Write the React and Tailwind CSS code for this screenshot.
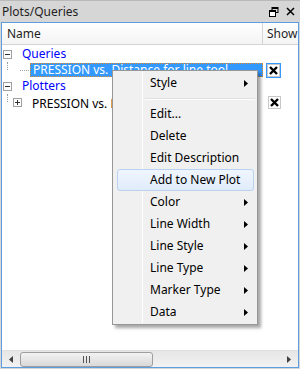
import React from "react";

const font = { fontFamily: '"Noto Sans", "Open Sans", sans-serif' };

function Arrow({ className = "" }) {
  return (
    <svg width="4" height="7" viewBox="0 0 4 7" className={className}>
      <path d="M0 0 L4 3.5 L0 7 Z" fill="#000" />
    </svg>
  );
}

function CheckX() {
  return (
    <div className="w-[13px] h-[13px] bg-white border border-[#c8c8c8] flex items-center justify-center">
      <svg width="9" height="9" viewBox="0 0 9 9">
        <path d="M1 1 L8 8 M8 1 L1 8" stroke="#000" strokeWidth="2.4" />
      </svg>
    </div>
  );
}

function Expander({ open }) {
  return (
    <div className="w-[9px] h-[9px] border border-[#a0a0a0] bg-white flex items-center justify-center">
      <svg width="7" height="7" viewBox="0 0 7 7">
        <path d="M1 3.5 H6" stroke="#333" strokeWidth="1" />
        {!open && <path d="M3.5 1 V6" stroke="#333" strokeWidth="1" />}
      </svg>
    </div>
  );
}

const menuItems = [
  { label: "Edit..." },
  { label: "Delete" },
  { label: "Edit Description" },
  { label: "Add to New Plot", hot: true },
  { label: "Color", sub: true },
  { label: "Line Width", sub: true },
  { label: "Line Style", sub: true },
  { label: "Line Type", sub: true },
  { label: "Marker Type", sub: true },
  { label: "Data", sub: true },
];

function MenuItem({ label, sub, hot }) {
  return (
    <div className="relative h-[22px] flex items-center pl-[36px]">
      {hot && (
        <div className="absolute left-[3px] right-[3px] top-0 bottom-0 rounded-[3px] border border-[#b8d2f0] bg-gradient-to-b from-[#f0f6fd] to-[#e0ecfb]" />
      )}
      <span className="relative text-[12px] text-black">{label}</span>
      {sub && <Arrow className="absolute left-[130px] top-[8px]" />}
    </div>
  );
}

export default function App() {
  return (
    <div className="relative w-[300px] h-[369px] bg-[#d6d6d6] flex flex-col overflow-hidden" style={font}>
      {/* title bar */}
      <div className="h-[22px] flex items-center border-t border-[#b9b9b9] pl-[2px] pr-[5px]">
        <span className="text-[12px] text-[#1e1e1e] flex-1">Plots/Queries</span>
        <svg width="10" height="10" viewBox="0 0 10 10" className="mr-[7px]">
          <rect x="3" y="0.5" width="6" height="5" fill="none" stroke="#000" />
          <rect x="3" y="0.5" width="6" height="1.5" fill="#000" />
          <rect x="0.5" y="3.5" width="6" height="6" fill="#fff" stroke="#000" />
          <rect x="0.5" y="3.5" width="6" height="1.5" fill="#000" />
        </svg>
        <svg width="9" height="9" viewBox="0 0 9 9">
          <path d="M1 1 L8 8 M8 1 L1 8" stroke="#000" strokeWidth="1.5" />
        </svg>
      </div>

      {/* panel */}
      <div className="flex-1 mx-[1px] mb-[1px] border border-[#5c9ee0] bg-white flex flex-col">
        {/* header */}
        <div className="h-[22px] flex border-b border-[#d5d5d5] bg-gradient-to-b from-white to-[#f4f4f4]">
          <div className="w-[261px] border-r border-[#d5d5d5] flex items-center pl-[5px] text-[12px] text-[#1e1e1e]">
            Name
          </div>
          <div className="flex-1 flex items-center pl-[4px] text-[12px] text-[#1e1e1e] overflow-hidden">
            Show
          </div>
        </div>

        {/* tree */}
        <div className="flex-1 relative pt-[1px]">
          <div className="h-[16px] flex items-center pl-[1px]">
            <Expander open />
            <span className="ml-[10px] text-[12px] text-[#0000ff]">Queries</span>
          </div>
          <div className="h-[16px] flex items-center relative">
            <div className="absolute left-[5px] top-0 h-[8px] border-l border-dotted border-[#a0a0a0]" />
            <div className="absolute left-[18px] top-[8px] w-[9px] border-t border-dotted border-[#a0a0a0]" />
            <div className="ml-[28px] w-[233px] h-[14px] bg-[#3399ff] border border-dotted border-[#e08a2e] flex items-center pl-[2px] overflow-hidden whitespace-nowrap">
              <span className="text-[12px] text-white">PRESSION vs. Distance for line tool</span>
            </div>
            <div className="ml-[3px] w-[15px] h-[15px] bg-[#3399ff] flex items-center justify-center">
              <CheckX />
            </div>
          </div>
          <div className="h-[16px] flex items-center pl-[1px]">
            <Expander open />
            <span className="ml-[10px] text-[12px] text-[#0000ff]">Plotters</span>
          </div>
          <div className="h-[16px] flex items-center relative">
            <div className="absolute left-[5px] top-0 h-[8px] border-l border-dotted border-[#a0a0a0]" />
            <div className="ml-[11px]">
              <Expander />
            </div>
            <div className="w-[242px] pl-[10px] overflow-hidden whitespace-nowrap">
              <span className="text-[12px] text-black">PRESSION vs. Distance for line tool</span>
            </div>
            <div className="ml-[4px]">
              <CheckX />
            </div>
          </div>
        </div>

        {/* horizontal scrollbar */}
        <div className="h-[17px] flex items-center bg-gradient-to-b from-[#e6e6e6] to-[#f2f2f2] border-t border-[#e0e0e0]">
          <div className="w-[18px] flex justify-center">
            <svg width="4" height="7" viewBox="0 0 4 7">
              <path d="M4 0 L0 3.5 L4 7 Z" fill="#404040" />
            </svg>
          </div>
          <div className="w-[133px] h-[15px] rounded-[3px] border border-[#9e9e9e] bg-gradient-to-b from-[#f3f3f3] to-[#d9d9d9] flex items-center justify-center">
            <div className="flex gap-[2px]">
              <div className="w-[1px] h-[7px] bg-[#555]" />
              <div className="w-[1px] h-[7px] bg-[#555]" />
              <div className="w-[1px] h-[7px] bg-[#555]" />
            </div>
          </div>
          <div className="flex-1" />
          <div className="w-[18px] flex justify-center">
            <svg width="4" height="7" viewBox="0 0 4 7">
              <path d="M0 0 L4 3.5 L0 7 Z" fill="#404040" />
            </svg>
          </div>
        </div>
      </div>

      {/* context menu */}
      <div className="absolute left-[112px] top-[70px] w-[146px] h-[255px] bg-[#f0f0f0] border border-[#979797] shadow-[3px_3px_3px_rgba(0,0,0,0.35)] py-[1px] pl-[1px]">
        <div className="absolute left-[29px] top-[1px] bottom-[1px] w-[1px] bg-[#e2e3e3] border-r border-white" />
        <MenuItem label="Style" sub />
        <div className="h-[9px] flex items-center">
          <div className="ml-[31px] mr-[2px] flex-1 h-[2px] border-t border-[#e0e0e0] border-b border-b-white" />
        </div>
        {menuItems.map((m) => (
          <MenuItem key={m.label} {...m} />
        ))}
      </div>
    </div>
  );
}
